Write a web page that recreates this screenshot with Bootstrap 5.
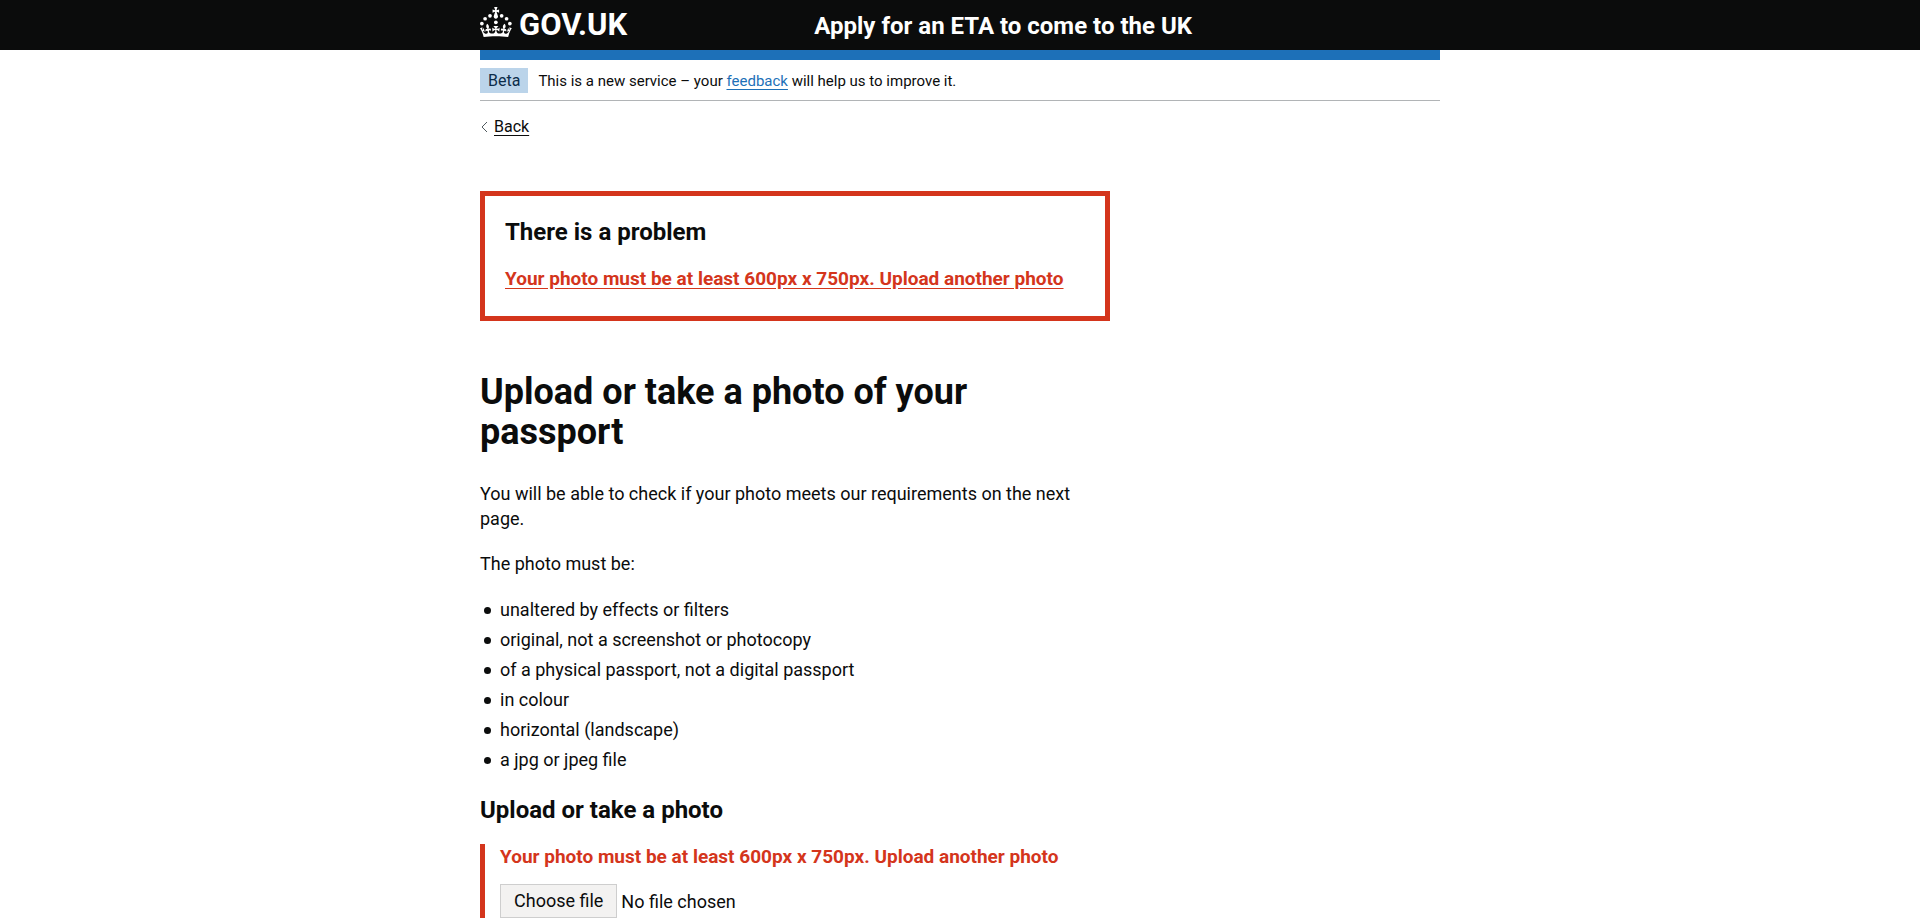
<!DOCTYPE html>
<html lang="en">
<head>
<meta charset="utf-8">
<meta name="viewport" content="width=device-width, initial-scale=1">
<title>Upload or take a photo of your passport</title>
<link href="https://cdn.jsdelivr.net/npm/bootstrap@5.3.0/dist/css/bootstrap.min.css" rel="stylesheet">
<style>
  :root { --ink: #0b0c0c; --blue: #1d70b8; --red: #d4351c; }
  body { font-family: Roboto, "Liberation Sans", sans-serif; font-size: 18px; line-height: 25px; color: var(--ink); }
  .page-width { max-width: 960px; }
  .two-thirds { max-width: 630px; }
  .site-header { background: var(--ink); }
  .header-row { min-height: 50px; }
  .logo-word { font-size: 31px; line-height: 30px; padding-top: 2px; }
  .logo-link { gap: 7px; padding-bottom: 2px; }
  .service-name { font-size: 24px; line-height: 30px; padding: 2px 0 0 187px; }
  .blue-bar { height: 10px; background: var(--blue); }
  .phase-banner { font-size: 15px; line-height: 20px; padding: 8px 0 7px; border-bottom: 1px solid #b1b4b6; gap: 10px; }
  .phase-tag { background: #bbd4ea; color: #0c2d4a; padding: 3px 8px 2px; font-size: 16px; }
  .text-link { color: var(--blue); text-underline-offset: 3px; }
  .back-link { font-size: 16px; line-height: 20px; color: var(--ink); margin-top: 16px; gap: 5px; text-underline-offset: 3px; }
  .error-summary { border: 5px solid var(--red); padding: 21px 20px 25px; margin: 54px 0 51px; }
  .title-m { font-size: 24px; line-height: 30px; margin-bottom: 19px; }
  .error-link, .error-text { font-size: 19px; color: var(--red); }
  .error-link { text-underline-offset: 3px; }
  .title-l { font-size: 36px; line-height: 40px; margin-bottom: 29px; }
  .body-text { margin-bottom: 20px; }
  .bullets li { margin-bottom: 5px; }
  .bullets li::before { content: ""; flex: none; width: 7px; height: 7px; border-radius: 50%; background: var(--ink); margin: 10px 9px 0 4px; }
  .bullets { margin: 21px 0 23px; }
  .form-error { border-left: 5px solid var(--red); padding-left: 15px; }
  .error-text { margin-bottom: 15px; }
  .file-button { background: #f3f2f1; border: 1px solid #cecece; color: var(--ink); padding: 4px 13px; line-height: 24px; }
</style>
</head>
<body>
<header class="site-header text-white">
  <div class="page-width mx-auto header-row d-flex align-items-center flex-wrap">
    <a href="#" class="logo-link d-flex align-items-center text-white text-decoration-none fw-bold" aria-label="GOV.UK">
      <svg width="32" height="30" viewBox="0 0 64 60" fill="currentColor" class="mb-1" aria-hidden="true">
        <circle cx="20" cy="17.6" r="3.7"/><circle cx="10.2" cy="23.5" r="3.7"/><circle cx="3.7" cy="33.2" r="3.7"/><circle cx="31.7" cy="30.6" r="3.7"/><circle cx="43.3" cy="17.6" r="3.7"/><circle cx="53.2" cy="23.5" r="3.7"/><circle cx="59.7" cy="33.2" r="3.7"/>
        <path d="M33.1,9.8c.2-.1.3-.3.5-.5l4.6,2.4v-6.8l-4.6,1.5c-.1-.2-.3-.3-.5-.5l1.9-5.9h-6.7l1.9,5.9c-.2.1-.3.3-.5.5l-4.6-1.5v6.8l4.6-2.4c.1.2.3.3.5.5l-2.6,8c-.9,2.8,1.2,5.7,4.1,5.7h0c3,0,5.1-2.9,4.1-5.7l-2.6-8ZM37,37.9s-3.4,3.8-4.1,6.1c2.2,0,4.2-.5,6.4-2.8l-.7,8.5c-2-2.8-4.4-4.1-5.7-3.8.1,3.1.5,6.7,5.8,7.2,3.7.3,6.7-1.5,7-3.8.4-2.6-2-4.3-3.7-1.6-1.4-4.5,2.4-6.1,4.9-3.2-1.9-4.5-1.8-7.7,2.4-10.9,3,4,2.6,7.3-1.2,11.1,2.4-1.3,6.2,0,4,4.6-1.2-2.8-3.7-2.2-4.2.2-.3,1.7.7,3.7,3,4.2,1.9.3,4.7-.9,7-5.9-1.3,0-2.4.7-3.9,1.7l2.4-8c.6,2.3,1.4,3.7,2.2,4.5.6-1.6.5-2.8,0-5.3l5,1.8c-2.6,3.6-5.2,8.7-7.3,17.5-7.4-1.1-15.7-1.7-24.5-1.7h0c-8.8,0-17.1.6-24.5,1.7-2.1-8.9-4.7-13.9-7.3-17.5l5-1.8c-.5,2.5-.6,3.7,0,5.3.8-.8,1.6-2.3,2.2-4.5l2.4,8c-1.5-1-2.6-1.7-3.9-1.7,2.3,5,5.2,6.2,7,5.9,2.3-.4,3.3-2.4,3-4.2-.5-2.4-3-3.1-4.2-.2-2.2-4.6,1.6-6,4-4.6-3.7-3.7-4.2-7.1-1.2-11.1,4.2,3.2,4.3,6.4,2.4,10.9,2.5-2.8,6.3-1.3,4.9,3.2-1.8-2.7-4.1-1-3.7,1.6.3,2.3,3.3,4.1,7,3.8,5.4-.5,5.7-4.2,5.8-7.2-1.3-.2-3.7,1-5.7,3.8l-.7-8.5c2.2,2.3,4.2,2.7,6.4,2.8-.7-2.3-4.1-6.1-4.1-6.1h10.6,0Z"/>
      </svg>
      <span class="logo-word">GOV.UK</span>
    </a>
    <a href="#" class="service-name fw-bold text-white text-decoration-none">Apply for an ETA to come to the UK</a>
  </div>
</header>
<div class="page-width mx-auto">
  <div class="blue-bar"></div>
  <div class="phase-banner d-flex align-items-center">
    <strong class="phase-tag fw-normal">Beta</strong>
    <span>This is a new service – your <a href="#" class="text-link">feedback</a> will help us to improve it.</span>
  </div>
  <div class="d-flex">
    <a href="#" class="back-link d-flex align-items-center">
      <svg width="9" height="12" viewBox="0 0 9 12" fill="none" stroke="#505a5f" aria-hidden="true"><path d="M7 1 2 6l5 5"/></svg>
      <span>Back</span>
    </a>
  </div>
  <main class="two-thirds">
    <div class="error-summary" role="alert">
      <h2 class="title-m fw-bold">There is a problem</h2>
      <a href="#photo" class="error-link fw-bold">Your photo must be at least 600px x 750px. Upload another photo</a>
    </div>
    <h1 class="title-l fw-bold">Upload or take a photo of your<br>passport</h1>
    <p class="body-text">You will be able to check if your photo meets our requirements on the next page.</p>
    <p class="body-text">The photo must be:</p>
    <ul class="bullets list-unstyled">
      <li class="d-flex">unaltered by effects or filters</li>
      <li class="d-flex">original, not a screenshot or photocopy</li>
      <li class="d-flex">of a physical passport, not a digital passport</li>
      <li class="d-flex">in colour</li>
      <li class="d-flex">horizontal (landscape)</li>
      <li class="d-flex">a jpg or jpeg file</li>
    </ul>
    <form>
      <h2 class="title-m fw-bold"><label for="photo">Upload or take a photo</label></h2>
      <div class="form-error">
        <p class="error-text fw-bold">Your photo must be at least 600px x 750px. Upload another photo</p>
        <div class="d-flex align-items-center gap-1">
          <button type="button" id="photo" class="file-button">Choose file</button>
          <span>No file chosen</span>
        </div>
      </div>
    </form>
  </main>
</div>
<script src="https://cdn.jsdelivr.net/npm/bootstrap@5.3.0/dist/js/bootstrap.bundle.min.js"></script>
</body>
</html>
